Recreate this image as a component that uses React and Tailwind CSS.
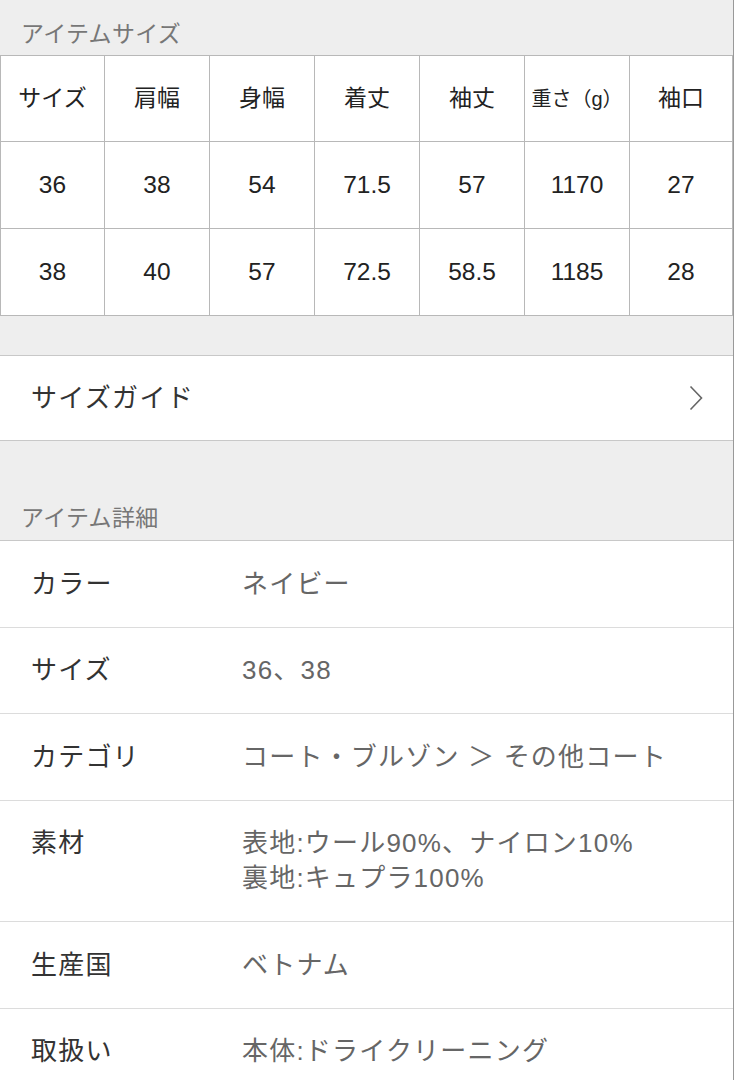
import React from "react";

const headers = ["サイズ", "肩幅", "身幅", "着丈", "袖丈", "重さ（g）", "袖口"];
const rows = [
  ["36", "38", "54", "71.5", "57", "1170", "27"],
  ["38", "40", "57", "72.5", "58.5", "1185", "28"],
];

const details = [
  { label: "カラー", value: ["ネイビー"] },
  { label: "サイズ", value: ["36、38"] },
  { label: "カテゴリ", value: ["コート・ブルゾン ＞ その他コート"] },
  { label: "素材", value: ["表地:ウール90%、ナイロン10%", "裏地:キュプラ100%"] },
  { label: "生産国", value: ["ベトナム"] },
  { label: "取扱い", value: ["本体:ドライクリーニング"] },
];

function Cell({ children, first, className }) {
  return (
    <div
      className={
        "flex items-center justify-center border-r border-b border-[#b8b8b8] text-[#222] " +
        (first ? "border-l " : "") +
        className
      }
    >
      {children}
    </div>
  );
}

export default function App() {
  return (
    <div
      className="w-[734px] h-[1080px] overflow-hidden bg-[#eeeeee] border-r border-[#999]"
      style={{ fontFamily: '"Liberation Sans", "Noto Sans CJK JP", sans-serif' }}
    >
      <div className="h-[55px] flex items-end pb-[4px] pl-[21px] text-[23px] tracking-[0.3px] text-[#777]">
        アイテムサイズ
      </div>

      <div className="grid grid-cols-[105px_105px_105px_105px_105px_105px_1fr] bg-white border-t border-[#b8b8b8]">
        {headers.map((h, i) => (
          <Cell
            key={h}
            first={i === 0}
            className={"h-[86px] " + (i === 5 ? "text-[20px]" : "text-[23px]")}
          >
            {h}
          </Cell>
        ))}
        {rows.map((r) =>
          r.map((v, i) => (
            <Cell key={r[0] + i} first={i === 0} className="h-[87px] text-[24.5px]">
              {v}
            </Cell>
          ))
        )}
      </div>

      <div className="h-[39px]" />

      <div className="h-[86px] bg-white border-t border-b border-[#c8c8c8] flex items-center justify-between pl-[31px] pr-[30px]">
        <span className="text-[26px] tracking-[1.3px] text-[#333]">サイズガイド</span>
        <svg width="14" height="26" viewBox="0 0 14 26" fill="none">
          <path d="M1.5 1.5 L12.5 13 L1.5 24.5" stroke="#666" strokeWidth="1.6" />
        </svg>
      </div>

      <div className="h-[99px] flex items-end pb-[5px] pl-[21px] text-[23px] tracking-[0.3px] text-[#777]">
        アイテム詳細
      </div>

      <div className="bg-white border-t border-[#c8c8c8]">
        {details.map((d) => (
          <div
            key={d.label}
            className="flex pt-[25.5px] pb-[25px] border-b border-[#dcdcdc] text-[26px] tracking-[1.2px] leading-[35px]"
          >
            <div className="w-[242px] pl-[31px] text-[#333]">{d.label}</div>
            <div className="text-[#666]">
              {d.value.map((v) => (
                <div key={v}>{v}</div>
              ))}
            </div>
          </div>
        ))}
      </div>
    </div>
  );
}
